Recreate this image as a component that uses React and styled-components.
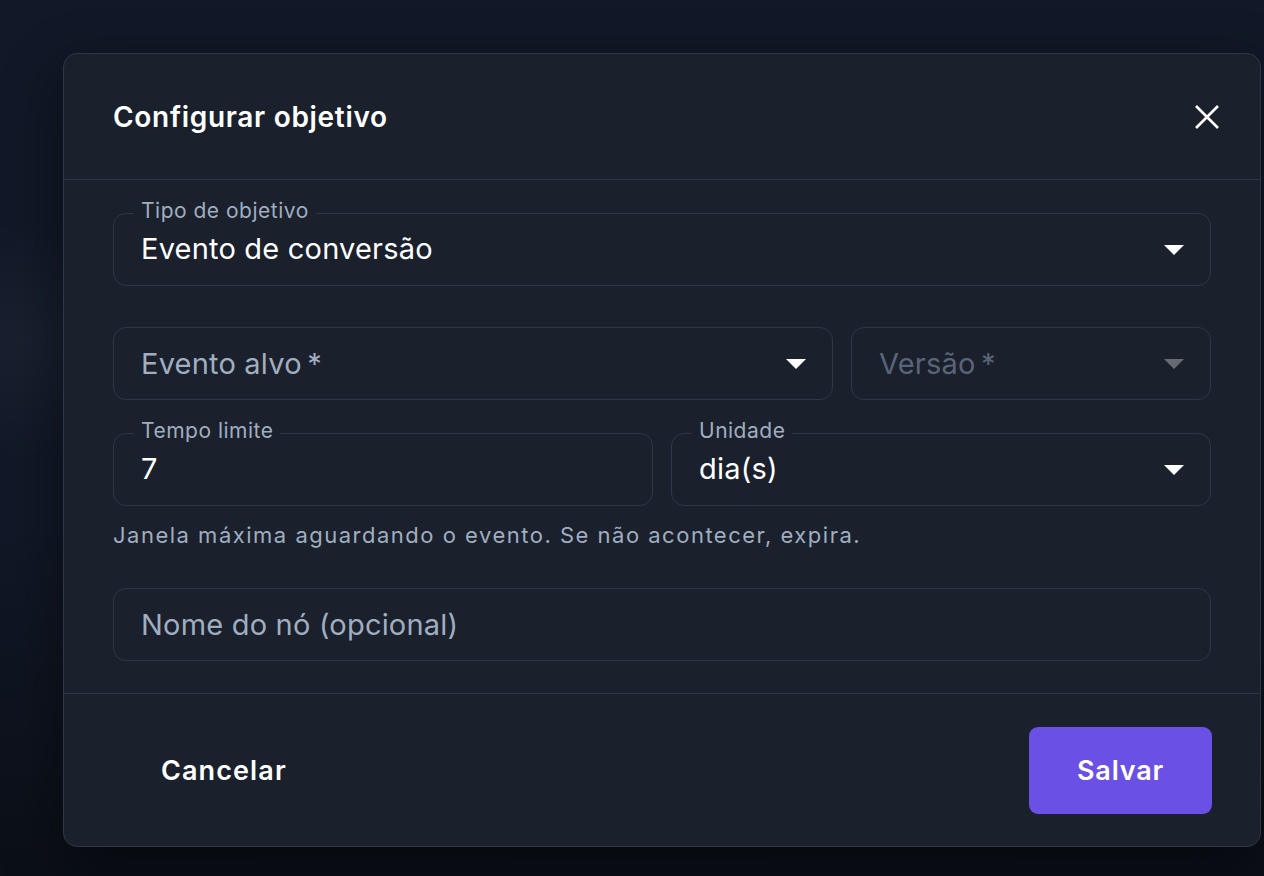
import React from 'react'
import styled, {createGlobalStyle} from 'styled-components'

const colors = {
  page: '#111827',
  panel: '#1a202c',
  line: '#2d3748',
  text: '#ffffff',
  muted: '#a0aec0',
  disabled: '#5a6478',
  purple: '#6b50e6',
}

const GlobalStyle = createGlobalStyle`
  html, body {
    margin: 0;
    height: 100%;
  }
  body {
    background: ${colors.page};
    font-family: Inter, "Noto Sans", sans-serif;
    color: ${colors.text};
    overflow: hidden;
  }
`

const Backdrop = styled.div`
  height: 876px;
  box-sizing: border-box;
  padding: 53px 3px 0 63px;
  background:
    radial-gradient(ellipse 140px 120px at 20px 340px, rgba(40, 48, 64, 0.35), transparent),
    linear-gradient(180deg, #111827 0%, #111827 60%, #0b0f17 100%);
`

const Dialog = styled.div`
  width: 1198px;
  height: 794px;
  box-sizing: border-box;
  background: ${colors.panel};
  border: 1.5px solid ${colors.line};
  border-radius: 14px;
  display: flex;
  flex-direction: column;
  box-shadow: 0 20px 60px rgba(0, 0, 0, 0.45);
`

const Header = styled.div`
  height: 125px;
  flex: 0 0 auto;
  display: flex;
  align-items: center;
  justify-content: space-between;
  padding: 0 33px 0 49px;
  border-bottom: 1.5px solid ${colors.line};
`

const Title = styled.h2`
  margin: 0;
  font-size: 28px;
  font-weight: 600;
  letter-spacing: 0.7px;
`

const CloseButton = styled.button`
  width: 40px;
  height: 40px;
  display: flex;
  align-items: center;
  justify-content: center;
  background: none;
  border: none;
  padding: 0;
  color: ${colors.text};
  cursor: pointer;
`

const Content = styled.div`
  flex: 1 1 auto;
  padding: 33px 49px 0 49px;
  display: flex;
  flex-direction: column;
  border-bottom: 1.5px solid ${colors.line};
`

const Row = styled.div`
  display: grid;
  grid-template-columns: ${p => p.cols || '1fr'};
  column-gap: 18px;
  margin-bottom: ${p => p.gap || 0}px;
`

const FieldRoot = styled.div`
  position: relative;
  height: 73px;
  display: flex;
  align-items: center;
  padding: 0 27px 0 28px;
  box-sizing: border-box;
`

const Outline = styled.fieldset`
  position: absolute;
  left: 0;
  right: 0;
  bottom: 0;
  top: ${p => (p.labelled ? '-12px' : '0')};
  margin: 0;
  padding: 0 0 0 20px;
  border: 1.5px solid ${colors.line};
  border-radius: 13px;
  pointer-events: none;
  min-width: 0;

  legend {
    padding: 0 7px;
    font-size: 21px;
    line-height: 24px;
    letter-spacing: 0.5px;
    color: ${colors.muted};
    white-space: nowrap;
    position: relative;
    top: -2px;
  }
`

const Value = styled.span`
  flex: 1;
  font-size: 29px;
  letter-spacing: 0.2px;
  color: ${p => (p.tone === 'placeholder' ? colors.muted : p.tone === 'disabled' ? colors.disabled : colors.text)};
  position: relative;
  top: ${p => (p.labelled ? '-1px' : '0')};
`

const Arrow = styled.svg`
  flex: 0 0 auto;
  width: 20px;
  height: 10px;
  fill: ${p => (p.disabled ? '#666a73' : colors.text)};
`

const Helper = styled.p`
  margin: 15px 0 39px;
  font-size: 22px;
  letter-spacing: 1.5px;
  color: ${colors.muted};
  line-height: 28px;
`

const Footer = styled.div`
  flex: 0 0 auto;
  height: 152px;
  display: flex;
  align-items: center;
  justify-content: space-between;
  padding: 0 48px 0 49px;
`

const TextButton = styled.button`
  background: none;
  border: none;
  color: ${colors.text};
  font-family: inherit;
  font-size: 27px;
  font-weight: 600;
  letter-spacing: 1.1px;
  padding: 0 48px;
  height: 86px;
  cursor: pointer;
`

const PrimaryButton = styled.button`
  background: ${colors.purple};
  border: none;
  border-radius: 9px;
  color: ${colors.text};
  font-family: inherit;
  font-size: 27px;
  font-weight: 600;
  letter-spacing: 0.8px;
  width: 183px;
  height: 87px;
  cursor: pointer;
`

function Field({label, value, tone, select, disabled}) {
  return (
    <FieldRoot>
      <Value tone={tone} labelled={!!label}>{value}</Value>
      {select && (
        <Arrow viewBox="0 0 20 10" disabled={disabled}>
          <path d="M0 0h20L10 10z" />
        </Arrow>
      )}
      <Outline labelled={!!label}>
        {label && <legend>{label}</legend>}
      </Outline>
    </FieldRoot>
  )
}

export default function App() {
  return (
    <>
      <GlobalStyle />
      <Backdrop>
        <Dialog>
          <Header>
            <Title>Configurar objetivo</Title>
            <CloseButton aria-label="Fechar">
              <svg width="24" height="24" viewBox="0 0 24 24">
                <path d="M1 1L23 23M23 1L1 23" stroke="#fff" strokeWidth="2.6" />
              </svg>
            </CloseButton>
          </Header>

          <Content>
            <Row gap={41}>
              <Field label="Tipo de objetivo" value="Evento de conversão" select />
            </Row>
            <Row cols="2fr 1fr" gap={33}>
              <Field value={'Evento alvo\u2009*'} tone="placeholder" select />
              <Field value={'Versão\u2009*'} tone="disabled" select disabled />
            </Row>
            <Row cols="1fr 1fr">
              <Field label="Tempo limite" value="7" />
              <Field label="Unidade" value="dia(s)" select />
            </Row>
            <Helper>Janela máxima aguardando o evento. Se não acontecer, expira.</Helper>
            <Row>
              <Field value="Nome do nó (opcional)" tone="placeholder" />
            </Row>
          </Content>

          <Footer>
            <TextButton>Cancelar</TextButton>
            <PrimaryButton>Salvar</PrimaryButton>
          </Footer>
        </Dialog>
      </Backdrop>
    </>
  )
}
